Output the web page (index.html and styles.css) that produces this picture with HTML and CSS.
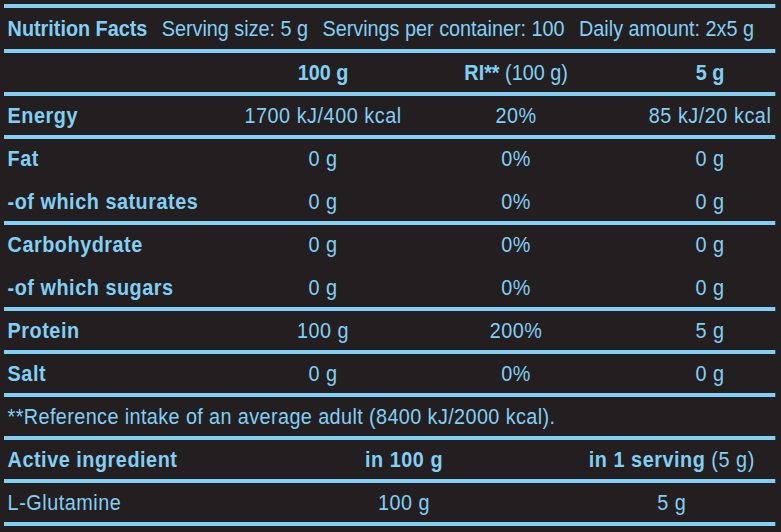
FILE: index.html
```html
<!DOCTYPE html>
<html>
<head>
<meta charset="utf-8">
<link rel="stylesheet" href="styles.css">
</head>
<body>
<div class="frame">
<div class="label">
  <div class="row head">
    <span class="b">Nutrition Facts</span>
    <span>Serving size: 5 g</span>
    <span>Servings per container: 100</span>
    <span>Daily amount: 2x5 g</span>
  </div>
  <div class="row grid4 colhead">
    <span></span>
    <span class="c b">100 g</span>
    <span class="c"><b>RI**</b> (100 g)</span>
    <span class="c last b">5 g</span>
  </div>
  <div class="row grid4 data">
    <span class="b">Energy</span>
    <span class="c">1700 kJ/400 kcal</span>
    <span class="c">20%</span>
    <span class="c last">85 kJ/20 kcal</span>
  </div>
  <div class="row grid4 data">
    <span class="b">Fat</span>
    <span class="c">0 g</span>
    <span class="c">0%</span>
    <span class="c last">0 g</span>
  </div>
  <div class="row grid4 data noline">
    <span class="b">-of which saturates</span>
    <span class="c">0 g</span>
    <span class="c">0%</span>
    <span class="c last">0 g</span>
  </div>
  <div class="row grid4 data">
    <span class="b">Carbohydrate</span>
    <span class="c">0 g</span>
    <span class="c">0%</span>
    <span class="c last">0 g</span>
  </div>
  <div class="row grid4 data noline">
    <span class="b">-of which sugars</span>
    <span class="c">0 g</span>
    <span class="c">0%</span>
    <span class="c last">0 g</span>
  </div>
  <div class="row grid4 data">
    <span class="b">Protein</span>
    <span class="c">100 g</span>
    <span class="c">200%</span>
    <span class="c last">5 g</span>
  </div>
  <div class="row grid4 data">
    <span class="b">Salt</span>
    <span class="c">0 g</span>
    <span class="c">0%</span>
    <span class="c last">0 g</span>
  </div>
  <div class="row data note">
    <span>**Reference intake of an average adult (8400 kJ/2000 kcal).</span>
  </div>
  <div class="row grid3 data">
    <span class="b">Active ingredient</span>
    <span class="c b">in 100 g</span>
    <span class="c last"><b>in 1 serving</b> (5 g)</span>
  </div>
  <div class="row grid3 data end">
    <span>L-Glutamine</span>
    <span class="c">100 g</span>
    <span class="c last">5 g</span>
  </div>
</div>
</div>
</body>
</html>
```
FILE: styles.css
```css
html, body {
  margin: 0;
  padding: 0;
  background: #231f20;
}
body {
  width: 781px;
  height: 532px;
  overflow: hidden;
  font-family: "Liberation Sans", Arial, sans-serif;
  font-size: 22px;
  color: #82cff5;
}
.frame {
  width: 781px;
  height: 532px;
  overflow: hidden;
}
/* condensed typeface: the whole label is drawn narrow */
.label {
  margin: 4px 0 0 4px;
  width: 857px;
  transform: scaleX(0.9);
  transform-origin: 0 0;
}
.row {
  border-top: 4px solid #82cff5;
  height: 39px;
  display: flex;
  align-items: center;
  white-space: nowrap;
}
.row.data {
  letter-spacing: 0.6px;
}
.row.note {
  letter-spacing: 0.45px;
}
.row > span:first-child {
  padding-left: 4px;
}
.row.noline {
  border-top-color: transparent;
}
.row.head {
  height: 41px;
  gap: 16px;
}
.row.end {
  border-bottom: 4px solid #82cff5;
}
.b, b {
  font-weight: bold;
}
.grid4 {
  display: grid;
  grid-template-columns: 257px 195px 234px 1fr;
  align-items: center;
}
.grid3 {
  display: grid;
  grid-template-columns: 340px 209px 1fr;
  align-items: center;
}
.c {
  text-align: center;
}
.grid4 .last {
  padding-left: 26px;
}
.grid3 .last {
  padding-left: 78px;
}
```
